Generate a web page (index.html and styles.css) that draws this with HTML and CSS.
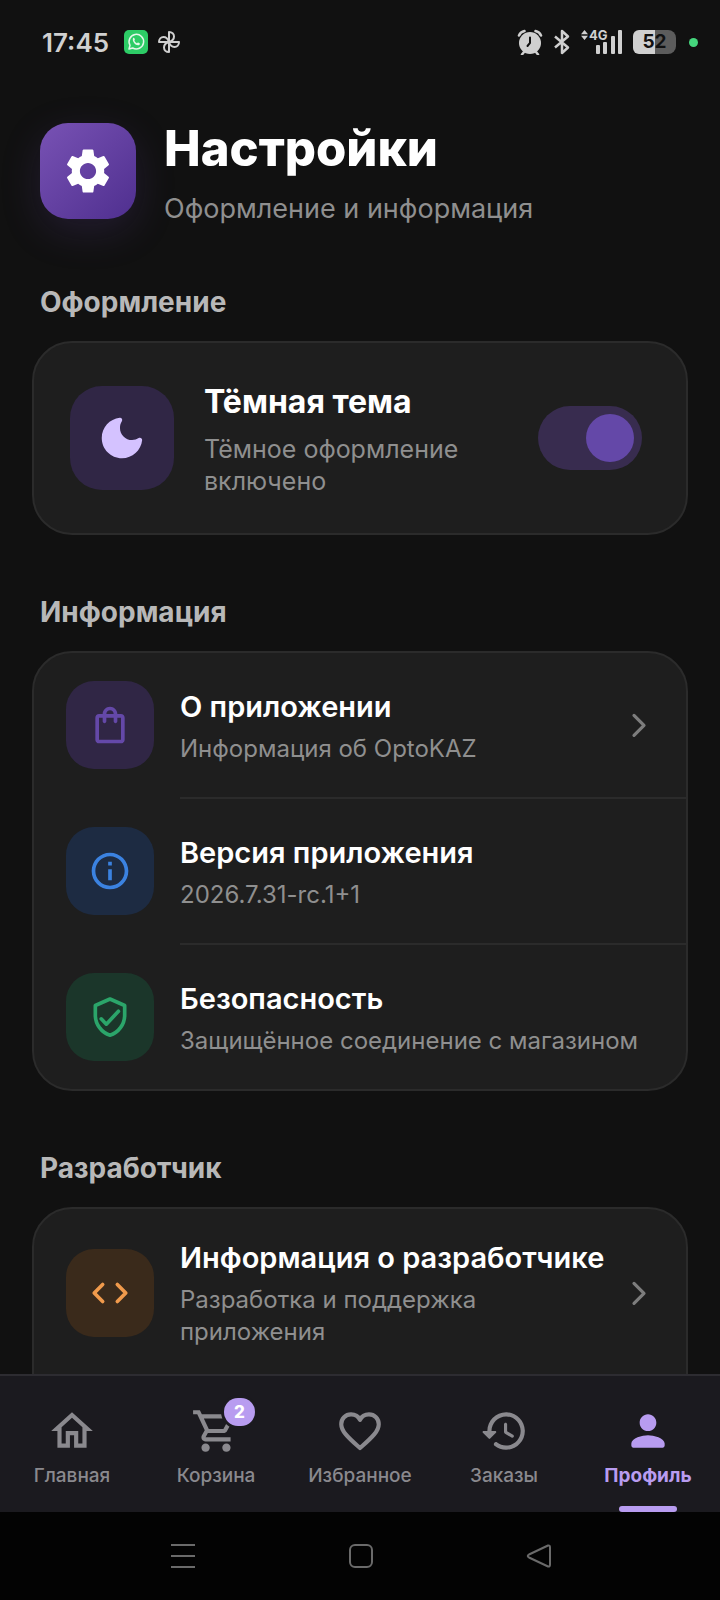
FILE: index.html
```html
<!DOCTYPE html>
<html lang="ru">

<head>
    <meta charset="UTF-8">
    <meta name="viewport" content="width=device-width, initial-scale=1.0">
    <title>Настройки</title>

    <link rel="stylesheet" href="styles.css">
</head>

<body>

    <!-- Status bar -->
    <div class="status-bar">
        <span class="clock">17:45</span>
        <svg class="status-app" width="24" height="24" viewBox="0 0 24 24">
            <rect width="24" height="24" rx="5" fill="#2dcc66" />
            <path d="M5 19l1-3.7A7.3 7.3 0 1 1 8.7 18z" fill="none" stroke="#e4f7e9" stroke-width="1.5" stroke-linejoin="round" />
            <path d="M9 8.2c.5-.6 1.2-.5 1.4.1l.5 1.2c.1.4-.6 1-.5 1.3.5 1.1 1.3 1.9 2.5 2.4.4.1.9-.9 1.3-.7l1.4.7c.6.3.3 1.2-.3 1.7-2.6 1.7-7.6-3.1-6.3-6.7z" fill="#e4f7e9" />
        </svg>
        <svg width="24" height="24" viewBox="0 0 24 24" fill="none" stroke="#cfcfcf" stroke-width="2" stroke-linejoin="round">
            <path d="M12 12V2c3 0 5 2 5 4.5S15 11 12 12z" />
            <path d="M12 12h10c0 3-2 5-4.5 5S13 15 12 12z" />
            <path d="M12 12v10c-3 0-5-2-5-4.5S9 13 12 12z" />
            <path d="M12 12H2c0-3 2-5 4.5-5S11 9 12 12z" />
        </svg>
        <div class="status-right">
            <svg width="26" height="26" viewBox="0 0 26 26">
                <circle cx="13" cy="14" r="11" fill="#d0d0d0" />
                <path d="M2 6.5C3 4 5 2.500 7.500 2M24 6.500C23 4 21 2.500 18.500 2M7 23l-2 2.500M19 23l2 2.500" stroke="#d0d0d0" stroke-width="2.500" stroke-linecap="round" fill="none" />
                <path d="M13 8.5V14l-2.5 3" stroke="#111" stroke-width="2" stroke-linecap="round" fill="none" />
            </svg>
            <svg width="18" height="26" viewBox="0 0 18 26" fill="none" stroke="#d0d0d0" stroke-width="2.5" stroke-linejoin="round">
                <path d="M2 7.500l13 11L9 24V2l6 5.500-13 11" />
            </svg>
            <div class="signal">
                <svg width="42" height="26" viewBox="0 0 42 26" fill="#d0d0d0">
                    <path d="M3.500 1L7 5.200H0zM3.500 11L0 6.800h7z" />
                    <rect x="15" y="16" width="4" height="9" rx="1" />
                    <rect x="22" y="13" width="4" height="12" rx="1" />
                    <rect x="30" y="7" width="4" height="18" rx="1" />
                    <rect x="37" y="1" width="4" height="24" rx="1" />
                </svg>
                <span class="network">4G</span>
            </div>
            <span class="battery">52</span>
            <span class="privacy-dot"></span>
        </div>
    </div>

    <main class="content">

        <header class="header">
            <div class="header-icon">
                <svg width="54" height="54" viewBox="0 0 24 24" fill="#fff">
                    <path d="M19.14 12.94c.04-.3.06-.61.06-.94 0-.32-.02-.64-.07-.94l2.03-1.58c.18-.14.23-.41.12-.61l-1.92-3.32c-.12-.22-.37-.29-.59-.22l-2.39.96c-.5-.38-1.03-.7-1.62-.94l-.36-2.54c-.04-.24-.24-.41-.48-.41h-3.84c-.24 0-.43.17-.47.41l-.36 2.54c-.59.24-1.13.57-1.62.94l-2.39-.96c-.22-.08-.47 0-.59.22L2.74 8.87c-.12.21-.08.47.12.61l2.03 1.58c-.05.3-.09.63-.09.94s.02.64.07.94l-2.03 1.58c-.18.14-.23.41-.12.61l1.92 3.32c.12.22.37.29.59.22l2.39-.96c.5.38 1.03.7 1.62.94l.36 2.54c.05.24.24.41.48.41h3.84c.24 0 .44-.17.47-.41l.36-2.54c.59-.24 1.13-.56 1.62-.94l2.39.96c.22.08.47 0 .59-.22l1.92-3.32c.12-.22.07-.47-.12-.61l-2.01-1.58zM12 15.6c-1.98 0-3.6-1.62-3.6-3.6s1.62-3.6 3.6-3.6 3.6 1.62 3.6 3.6-1.62 3.6-3.6 3.6z" />
                </svg>
            </div>
            <div class="header-text">
                <h1>Настройки</h1>
                <p>Оформление и информация</p>
            </div>
        </header>

        <section>
            <h2>Оформление</h2>
            <div class="card theme-card">
                <div class="theme-icon">
                    <svg width="54" height="54" viewBox="0 0 24 24" fill="#d4c2ff">
                        <path d="M11.01 3.05C6.51 3.54 3 7.36 3 12c0 4.97 4.03 9 9 9 4.63 0 8.45-3.5 8.95-8 .09-.79-.78-1.42-1.54-.95-.84.54-1.84.85-2.91.85-2.98 0-5.4-2.42-5.4-5.4 0-1.06.31-2.06.84-2.89.45-.67-.04-1.63-.93-1.56z" />
                    </svg>
                </div>
                <label class="theme-text" for="dark-theme">
                    <span class="theme-title">Тёмная тема</span>
                    <span class="theme-subtitle">Тёмное оформление включено</span>
                </label>
                <input class="switch" type="checkbox" role="switch" id="dark-theme" checked>
            </div>
        </section>

        <section>
            <h2>Информация</h2>
            <div class="card">
                <button class="row" type="button">
                    <span class="row-icon purple">
                        <svg width="44" height="44" viewBox="0 0 24 24" fill="currentColor">
                            <path d="M18 6h-2c0-2.21-1.79-4-4-4S8 3.79 8 6H6c-1.1 0-2 .9-2 2v12c0 1.1.9 2 2 2h12c1.1 0 2-.9 2-2V8c0-1.1-.9-2-2-2zm-6-2c1.1 0 2 .9 2 2h-4c0-1.1.9-2 2-2zm6 16H6V8h2v2c0 .55.45 1 1 1s1-.45 1-1V8h4v2c0 .55.45 1 1 1s1-.45 1-1V8h2v12z" />
                        </svg>
                    </span>
                    <span class="row-text">
                        <span class="row-title">О приложении</span>
                        <span class="subtitle">Информация об OptoKAZ</span>
                    </span>
                    <svg class="chevron" width="48" height="48" viewBox="0 0 24 24">
                        <path d="M10 7.200l5 5-5 5" />
                    </svg>
                </button>
                <div class="row">
                    <span class="row-icon blue">
                        <svg width="44" height="44" viewBox="0 0 24 24" fill="currentColor">
                            <path d="M11 7h2v2h-2zm0 4h2v6h-2zm1-9C6.48 2 2 6.48 2 12s4.48 10 10 10 10-4.48 10-10S17.52 2 12 2zm0 18c-4.41 0-8-3.59-8-8s3.59-8 8-8 8 3.59 8 8-3.59 8-8 8z" />
                        </svg>
                    </span>
                    <span class="row-text">
                        <span class="row-title">Версия приложения</span>
                        <span class="subtitle">2026.7.31-rc.1+1</span>
                    </span>
                </div>
                <div class="row">
                    <span class="row-icon green">
                        <svg width="44" height="44" viewBox="0 0 24 24" fill="none" stroke="currentColor" stroke-width="2" stroke-linejoin="round" stroke-linecap="round">
                            <path d="M12 2.200L4 5.700V11c0 5 3.400 9.600 8 10.900 4.600-1.300 8-5.900 8-10.900V5.700z" />
                            <path d="M7.200 13l2.800 2.900 6.600-7" />
                        </svg>
                    </span>
                    <span class="row-text">
                        <span class="row-title">Безопасность</span>
                        <span class="subtitle">Защищённое соединение с магазином</span>
                    </span>
                </div>
            </div>
        </section>

        <section>
            <h2>Разработчик</h2>
            <div class="card card-last">
                <button class="row" type="button">
                    <span class="row-icon orange">
                        <svg width="44" height="44" viewBox="0 0 24 24" fill="none" stroke="currentColor" stroke-width="2" stroke-linejoin="round" stroke-linecap="round">
                            <path d="M8 7.400L3.400 12 8 16.600M16 7.400l4.600 4.600-4.600 4.600" />
                        </svg>
                    </span>
                    <span class="row-text">
                        <span class="row-title">Информация о разработчике</span>
                        <span class="subtitle">Разработка и поддержка приложения</span>
                    </span>
                    <svg class="chevron" width="48" height="48" viewBox="0 0 24 24">
                        <path d="M10 7.200l5 5-5 5" />
                    </svg>
                </button>
            </div>
        </section>

    </main>

    <!-- Bottom navigation -->
    <nav class="tabs">
        <a class="tab" href="#home">
            <svg width="50" height="50" viewBox="0 0 24 24" fill="currentColor">
                <path d="M12 5.69l5 4.5V18h-2v-6H9v6H7v-7.81l5-4.5M12 3L2 12h3v8h6v-6h2v6h6v-8h3L12 3z" />
            </svg>
            <span>Главная</span>
        </a>
        <a class="tab" href="#cart">
            <span class="cart-icon">
                <svg width="50" height="50" viewBox="0 0 24 24" fill="currentColor">
                    <path d="M15.55 13c.75 0 1.41-.41 1.75-1.03l3.58-6.49c.37-.66-.11-1.48-.87-1.48H5.21l-.94-2H1v2h2l3.6 7.59-1.35 2.44C4.52 15.37 5.48 17 7 17h12v-2H7l1.1-2h7.45zM6.16 6h12.15l-2.76 5H8.53L6.16 6zM7 18c-1.1 0-1.99.9-1.99 2S5.9 22 7 22s2-.9 2-2-.9-2-2-2zm10 0c-1.1 0-1.99.9-1.99 2s.89 2 1.99 2 2-.9 2-2-.9-2-2-2z" />
                </svg>
                <span class="badge">2</span>
            </span>
            <span>Корзина</span>
        </a>
        <a class="tab" href="#favorites">
            <svg width="50" height="50" viewBox="0 0 24 24" fill="none" stroke="currentColor" stroke-width="2" stroke-linejoin="round">
                <path d="M12 6.600C11.200 4.900 9.600 4 7.700 4 5 4 3 6.100 3 8.700c0 3.300 3.200 6.300 7.900 10.500l1.100 1 1.100-1C17.800 15 21 12 21 8.700 21 6.100 19 4 16.300 4c-1.900 0-3.500.9-4.300 2.600z" />
            </svg>
            <span>Избранное</span>
        </a>
        <a class="tab" href="#orders">
            <svg width="50" height="50" viewBox="0 0 24 24" fill="currentColor">
                <path d="M13.26 3C8.17 2.86 4 6.95 4 12H2.21c-.45 0-.67.54-.35.85l2.79 2.8c.2.2.51.2.71 0l2.79-2.8c.31-.31.09-.85-.36-.85H6c0-3.9 3.18-7.05 7.1-7 3.72.05 6.85 3.18 6.9 6.9.05 3.91-3.1 7.1-7 7.1-1.61 0-3.1-.55-4.28-1.48-.4-.31-.96-.28-1.32.08-.42.43-.39 1.13.08 1.49C9 20.29 10.91 21 13 21c5.05 0 9.14-4.17 9-9.26-.13-4.69-4.05-8.61-8.74-8.74zm-.51 5c-.41 0-.75.34-.75.75v3.68c0 .35.19.68.49.86l3.12 1.85c.36.21.82.09 1.03-.26.21-.36.09-.82-.26-1.03l-2.88-1.71v-3.4c0-.4-.34-.74-.75-.74z" />
            </svg>
            <span>Заказы</span>
        </a>
        <a class="tab active" href="#profile" aria-current="page">
            <svg width="50" height="50" viewBox="0 0 24 24" fill="currentColor">
                <path d="M12 12c2.21 0 4-1.79 4-4s-1.79-4-4-4-4 1.79-4 4 1.79 4 4 4zm0 2c-2.67 0-8 1.34-8 4v1c0 .55.45 1 1 1h14c.55 0 1-.45 1-1v-1c0-2.66-5.33-4-8-4z" />
            </svg>
            <span>Профиль</span>
        </a>
    </nav>

    <!-- System buttons -->
    <div class="system-bar">
        <button type="button" aria-label="Меню">
            <svg width="26" height="26" viewBox="0 0 26 26"><path d="M1 2h24M1 13h24M1 24h24" /></svg>
        </button>
        <button type="button" aria-label="Домой">
            <svg width="26" height="26" viewBox="0 0 26 26"><rect x="2" y="2" width="22" height="22" rx="5" /></svg>
        </button>
        <button type="button" aria-label="Назад">
            <svg width="26" height="26" viewBox="0 0 26 26"><path d="M22 2.500L3 11.500q-2.500 1.500 0 3L22 23.500q2 .5 2-2v-17q0-2.500-2-2z" /></svg>
        </button>
    </div>

</body>

</html>
```

FILE: styles.css
```css
* {
    margin: 0;
    padding: 0;
    box-sizing: border-box;
}

body {
    height: 100vh;
    display: flex;
    flex-direction: column;
    background-color: #111111;
    color: #ffffff;
    font-family: Inter, Roboto, sans-serif;
}

svg {
    display: block;
    flex-shrink: 0;
}

button {
    border: none;
    background: none;
    color: inherit;
    font-family: inherit;
    text-align: left;
    cursor: pointer;
}

/* Status bar */
.status-bar {
    height: 84px;
    flex-shrink: 0;
    display: flex;
    align-items: center;
    gap: 9px;
    padding: 0 22px 0 42px;
}

.clock {
    font-size: 26px;
    font-weight: 600;
    color: #d0d0d0;
}

.status-app {
    margin-left: 6px;
}

.status-right {
    display: flex;
    align-items: center;
    gap: 10px;
    margin-left: auto;
}

.signal {
    position: relative;
}

.network {
    position: absolute;
    top: 0;
    left: 8px;
    font-size: 13px;
    font-weight: 700;
    line-height: 12px;
    color: #d0d0d0;
}

.battery {
    width: 43px;
    height: 24px;
    border-radius: 6px 8px 8px 6px;
    background: linear-gradient(to right, #d0d0d0 52%, #5c5c5c 52%);
    color: #111111;
    font-size: 19px;
    font-weight: 700;
    line-height: 24px;
    text-align: center;
}

.privacy-dot {
    width: 9px;
    height: 9px;
    margin-left: 3px;
    border-radius: 50%;
    background-color: #45d67d;
}

/* Scrollable content */
.content {
    flex: 1;
    min-height: 0;
    overflow-y: auto;
    scrollbar-width: none;
    padding: 32px 32px 0;
}

.header {
    display: flex;
    align-items: center;
    gap: 28px;
    padding: 0 8px;
    margin-bottom: 59px;
}

.header-icon {
    width: 96px;
    height: 96px;
    display: flex;
    align-items: center;
    justify-content: center;
    border-radius: 28px;
    background: linear-gradient(135deg, #7852b4, #4f2f8f);
    box-shadow: 0 12px 40px rgba(103, 71, 171, 0.2);
}

.header-text {
    display: flex;
    flex-direction: column;
    gap: 10px;
}

h1 {
    font-size: 49px;
    font-weight: 800;
    line-height: 66px;
}

.header-text p {
    font-size: 27px;
    line-height: 34px;
    color: #8f8f8f;
}

section {
    margin-bottom: 60px;
}

h2 {
    margin: 0 8px 22px;
    font-size: 28px;
    font-weight: 700;
    line-height: 34px;
    color: #b8b8b8;
}

.card {
    border: 2px solid #2b2b2b;
    border-radius: 40px;
    background-color: #1e1e1e;
}

.card-last {
    padding-bottom: 60px;
}

.subtitle {
    font-size: 24px;
    line-height: 32px;
    color: #8f8f8f;
}

/* Dark theme card */
.theme-card {
    display: flex;
    align-items: center;
    padding: 36px 44px 36px 36px;
}

.theme-icon {
    width: 104px;
    height: 104px;
    flex-shrink: 0;
    display: flex;
    align-items: center;
    justify-content: center;
    border-radius: 32px;
    background-color: #302645;
}

.theme-text {
    flex: 1;
    display: flex;
    flex-direction: column;
    gap: 8px;
    margin: 0 24px 0 30px;
}

.theme-title {
    font-size: 32px;
    font-weight: 700;
    line-height: 46px;
}

.theme-subtitle {
    font-size: 25px;
    line-height: 32px;
    color: #8f8f8f;
}

.switch {
    appearance: none;
    width: 104px;
    height: 64px;
    flex-shrink: 0;
    display: flex;
    align-items: center;
    padding: 0 8px;
    border-radius: 32px;
    background-color: #333333;
    cursor: pointer;
}

.switch::before {
    content: "";
    width: 48px;
    height: 48px;
    border-radius: 50%;
    background-color: #8f8f8f;
}

.switch:checked {
    justify-content: flex-end;
    background-color: #382c4f;
}

.switch:checked::before {
    background-color: #6448a8;
}

/* List rows */
.row {
    position: relative;
    width: 100%;
    display: flex;
    align-items: center;
    gap: 26px;
    padding: 28px 24px 28px 32px;
}

.row + .row {
    margin-top: 2px;
}

/* Divider starts where the text does */
.row + .row::before {
    content: "";
    position: absolute;
    top: -2px;
    left: 146px;
    right: 0;
    height: 2px;
    background-color: #2b2b2b;
}

.row-icon {
    width: 88px;
    height: 88px;
    flex-shrink: 0;
    display: flex;
    align-items: center;
    justify-content: center;
    border-radius: 28px;
}

.purple {
    background-color: #302645;
    color: #6448a8;
}

.blue {
    background-color: #1d2b42;
    color: #3b82e0;
}

.green {
    background-color: #1b362a;
    color: #2ba56a;
}

.orange {
    background-color: #3a2a1b;
    color: #f09a4c;
}

.row-text {
    flex: 1;
    display: flex;
    flex-direction: column;
    gap: 7px;
    padding-top: 2px;
}

.row-title {
    font-size: 29px;
    font-weight: 600;
    line-height: 38px;
}

.chevron {
    margin-left: -26px;
    fill: none;
    stroke: #7d7d7d;
    stroke-width: 1.6;
    stroke-linecap: round;
    stroke-linejoin: round;
}

/* Bottom navigation */
.tabs {
    flex-shrink: 0;
    height: 138px;
    display: flex;
    border-top: 2px solid #2d2c31;
    background-color: #1b1a1f;
}

.tab {
    position: relative;
    flex: 1;
    display: flex;
    flex-direction: column;
    align-items: center;
    gap: 8px;
    padding-top: 30px;
    color: #8a898e;
    font-size: 19px;
    font-weight: 500;
    line-height: 24px;
    text-decoration: none;
}

.tab.active {
    color: #b89cf0;
    font-weight: 700;
}

.tab.active::after {
    content: "";
    position: absolute;
    bottom: 0;
    width: 58px;
    height: 6px;
    border-radius: 3px;
    background-color: #b89cf0;
}

.cart-icon {
    position: relative;
}

.badge {
    position: absolute;
    top: -8px;
    left: 33px;
    width: 31px;
    height: 28px;
    border-radius: 14px;
    background-color: #b89cf0;
    box-shadow: 0 0 0 3px #1b1a1f;
    color: #ffffff;
    font-size: 17px;
    font-weight: 800;
    line-height: 28px;
    text-align: center;
}

/* System buttons */
.system-bar {
    height: 88px;
    flex-shrink: 0;
    display: flex;
    align-items: center;
    justify-content: space-between;
    padding: 0 168px 0 170px;
    background-color: #030303;
}

.system-bar svg {
    fill: none;
    stroke: #6a6a6a;
    stroke-width: 2;
}
```
